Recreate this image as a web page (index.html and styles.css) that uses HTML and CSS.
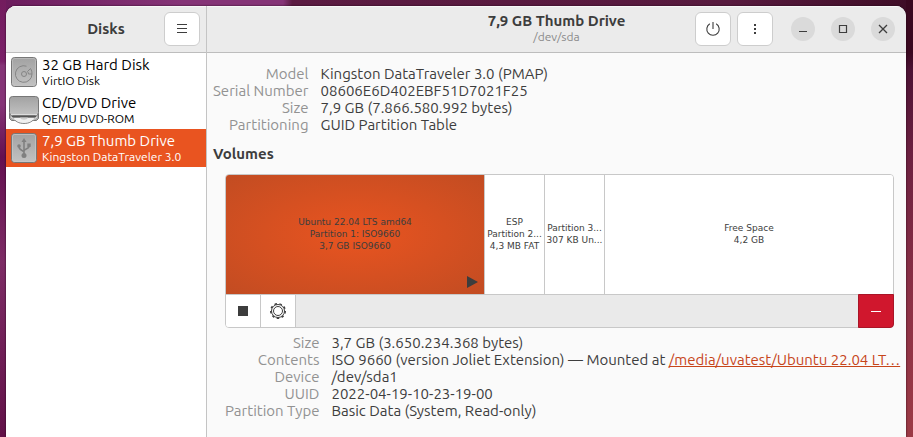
FILE: index.html
```html
<!DOCTYPE html>
<html lang="en">
<head>
<meta charset="utf-8">
<title>Disks</title>
<meta name="viewport" content="width=device-width, initial-scale=1">
<link rel="stylesheet" href="styles.css">
</head>
<body>
<div class="window">
  <aside class="sidebar">
    <header class="bar bar-side">
      <h1 class="title">Disks</h1>
      <button class="tool" type="button" aria-label="Menu">
        <svg width="16" height="16" viewBox="0 0 16 16"><path d="M3 3.500h10M3 7.500h10M3 11.500h10" stroke="#3d3d3d" fill="none"/></svg>
      </button>
    </header>
    <nav class="disks">
      <a class="disk" href="#hdd">
        <svg class="disk-icon" width="32" height="32" viewBox="0 0 32 32">
          <defs><linearGradient id="metal" x1="0" y1="0" x2="0" y2="1"><stop offset="0" stop-color="#a2a2a2"/><stop offset="1" stop-color="#c2c2c2"/></linearGradient></defs>
          <rect x="3.500" y="1.500" width="25" height="29" rx="3" fill="url(#metal)" stroke="#777"/>
          <rect x="4.500" y="2.500" width="23" height="27" rx="2" fill="none" stroke="#c4c4c4" stroke-opacity=".6"/>
          <path d="M18.500 10.200A8.300 8.300 0 1 0 24 18h-3.500a5 5 0 0 0-1-2.500l3-3M24 18a8 8 0 0 0-1.500-5.500" fill="none" stroke="#858585"/>
          <circle cx="16" cy="18" r="2.500" fill="none" stroke="#858585"/>
        </svg>
        <span class="disk-text"><span class="name">32 GB Hard Disk</span><span class="sub">VirtIO Disk</span></span>
      </a>
      <a class="disk" href="#cd">
        <svg class="disk-icon" width="32" height="32" viewBox="0 0 32 32">
          <path d="M1.500 19h29v5.500l-2 2h-25l-2-2z" fill="#aaa" stroke="#777"/>
          <path d="M5 23.500h22c-2 4-6 6-11 6s-9-2-11-6z" fill="#f0f0f0" stroke="#888"/>
          <path d="M12 23.500h8c-1 3-7 3-8 0z" fill="#ccc"/>
          <rect x="1.500" y="2.500" width="29" height="19" rx="3" fill="url(#metal)" stroke="#777"/>
          <path d="M3 20.500h26M3 23l4 3M29 23l-4 3" stroke="#ddd" fill="none"/>
          <path d="M4 22.500h24" stroke="#555"/>
        </svg>
        <span class="disk-text"><span class="name">CD/DVD Drive</span><span class="sub">QEMU DVD-ROM</span></span>
      </a>
      <a class="disk selected" href="#thumb" aria-current="true">
        <svg class="disk-icon" width="32" height="32" viewBox="0 0 32 32">
          <rect x="3.500" y="1.500" width="25" height="29" rx="3" fill="url(#metal)" stroke="#777"/>
          <rect x="4.500" y="2.500" width="23" height="27" rx="2" fill="none" stroke="#c8c8c8" stroke-opacity=".7"/>
          <path d="M16 8v15M16 20.500c0-2.500-5-1.500-5-6M16 19c0-2.500 5-1.500 5-5" fill="none" stroke="#808080" stroke-width="1.600"/>
          <path d="M16 6l-2.500 4h5z" fill="#808080"/><circle cx="16" cy="23.500" r="2.500" fill="#808080"/><circle cx="11" cy="14" r="1.800" fill="#808080"/><rect x="19.300" y="11.500" width="3.400" height="3.400" fill="#808080"/>
        </svg>
        <span class="disk-text"><span class="name">7,9 GB Thumb Drive</span><span class="sub">Kingston DataTraveler 3.0</span></span>
      </a>
    </nav>
  </aside>
  <main class="main">
    <header class="bar bar-main">
      <div class="heading"><h2 class="title">7,9 GB Thumb Drive</h2><span class="path">/dev/sda</span></div>
      <div class="bar-end">
        <div class="actions">
          <button class="tool" type="button" aria-label="Power off">
            <svg width="16" height="16" viewBox="0 0 16 16"><path d="M8 1v7M4.800 2.800a6.200 6.200 0 1 0 6.400 0" stroke="#3d3d3d" stroke-width="1.100" fill="none"/></svg>
          </button>
          <button class="tool" type="button" aria-label="Drive options">
            <svg width="16" height="16" viewBox="0 0 16 16" fill="#3d3d3d"><path d="M7 3h2v2H7zM7 7h2v2H7zM7 11h2v2H7z"/></svg>
          </button>
        </div>
        <div class="controls">
          <button class="round" type="button" aria-label="Minimize"><svg width="16" height="16" viewBox="0 0 16 16"><path d="M4 10.500h8" stroke="#3d3d3d"/></svg></button>
          <button class="round" type="button" aria-label="Maximize"><svg width="16" height="16" viewBox="0 0 16 16"><path d="M4.500 4.500h7v7h-7z" stroke="#3d3d3d" stroke-width="1.200" fill="none"/></svg></button>
          <button class="round" type="button" aria-label="Close"><svg width="16" height="16" viewBox="0 0 16 16"><path d="M4 4l8 8M12 4l-8 8" stroke="#3d3d3d" stroke-width="1.300"/></svg></button>
        </div>
      </div>
    </header>
    <div class="content">
      <dl class="facts">
        <dt>Model</dt><dd>Kingston DataTraveler 3.0 (PMAP)</dd>
        <dt>Serial Number</dt><dd>08606E6D402EBF51D7021F25</dd>
        <dt>Size</dt><dd>7,9 GB (7.866.580.992 bytes)</dd>
        <dt>Partitioning</dt><dd>GUID Partition Table</dd>
      </dl>
      <h3 class="section">Volumes</h3>
      <div class="volume-area">
        <div class="volumes">
          <div class="map">
            <div class="part active">
              <span>Ubuntu 22.04 LTS amd64</span><span>Partition 1: ISO9660</span><span>3,7 GB ISO9660</span>
              <svg class="mounted" width="11" height="12" viewBox="0 0 11 12"><path d="M0 0l11 6-11 6z" fill="#3d3d3d"/></svg>
            </div>
            <div class="part"><span>ESP</span><span>Partition 2...</span><span>4,3 MB FAT</span></div>
            <div class="part"><span>Partition 3...</span><span>307 KB Un...</span></div>
            <div class="part"><span>Free Space</span><span>4,2 GB</span></div>
          </div>
          <div class="strip">
            <button class="cell" type="button" aria-label="Unmount"><svg width="16" height="16" viewBox="0 0 16 16"><path d="M3 3h10v10H3z" fill="#3d3d3d"/></svg></button>
            <button class="cell" type="button" aria-label="Partition options"><svg width="16" height="16" viewBox="0 0 16 16" fill="none" stroke="#3d3d3d"><circle cx="8" cy="8" r="6.500"/><circle cx="8" cy="8" r="4.500"/><circle cx="8" cy="8" r="7.300" stroke-width="1.400" stroke-dasharray="2.500 2.596"/></svg></button>
            <button class="cell delete" type="button" aria-label="Delete partition"><svg width="16" height="16" viewBox="0 0 16 16"><path d="M3 8.500h10" stroke="#fff"/></svg></button>
          </div>
        </div>
        <dl class="facts">
          <dt>Size</dt><dd>3,7 GB (3.650.234.368 bytes)</dd>
          <dt>Contents</dt><dd>ISO 9660 (version Joliet Extension) — Mounted at <a class="link" href="#media">/media/uvatest/Ubuntu 22.04 LT…</a></dd>
          <dt>Device</dt><dd>/dev/sda1</dd>
          <dt>UUID</dt><dd>2022-04-19-10-23-19-00</dd>
          <dt>Partition Type</dt><dd>Basic Data (System, Read-only)</dd>
        </dl>
      </div>
    </div>
  </main>
</div>
</body>
</html>
```
FILE: styles.css
```css
* { box-sizing: border-box; }
body {
  margin: 0;
  min-height: 100vh;
  display: flex;
  padding: 6px 7px 0 6px;
  font-family: Ubuntu, "Noto Sans", sans-serif;
  font-size: 15px;
  line-height: 17px;
  color: #3d3d3d;
  background:
    linear-gradient(to bottom, #3a0820 12%, #4c1234 16%, #6c2040 35%, #8d3145 70%, #9c3a45) right / 7px 100% no-repeat,
    linear-gradient(to bottom, #731c5e, #7a2068 14%, #853477 15%, #853477 24%, #641050 36%, #7d2c65 60%, #621148) left / 6px 100% no-repeat,
    linear-gradient(to right, #6b1b5c, #853477 20%, #853477 31%, #5b1b42 32%, #571a3e 80%, #3e0d26);
}
h1, h2, h3, dl, dd { margin: 0; }
button { font: inherit; padding: 0; border: 0; display: grid; place-items: center; }
svg { display: block; }
.window {
  flex: 1;
  min-width: 0;
  display: flex;
  overflow: hidden;
  border-radius: 10px 10px 0 0;
  background: #fafafa;
  box-shadow: 0 0 2px #1c0614;
}
.sidebar { width: 201px; flex: none; border-right: 1px solid #c4c4c4; background: #fff; }
.bar {
  display: flex;
  align-items: center;
  height: 47px;
  background: #ebebeb;
  border-bottom: 1px solid #bdbdbd;
  box-shadow: inset 0 1px #f8f8f8;
}
.bar-side { padding-right: 6px; }
.title { font-size: 15px; font-weight: 700; line-height: 16px; }
.bar-side .title { flex: 1; text-align: center; padding-left: 42px; }
.tool {
  width: 36px;
  height: 34px;
  background: #fff;
  border: 1px solid #cdcdcd;
  border-radius: 6px;
}
.disk {
  display: flex;
  align-items: center;
  gap: 2px;
  height: 38px;
  padding-left: 2px;
  color: #000;
  text-decoration: none;
  white-space: nowrap;
}
.disk-text { display: flex; flex-direction: column; }
.name { font-size: 15px; line-height: 17px; }
.sub { font-size: 12px; line-height: 16px; }
.selected { background: #e95420; color: #fff; }
.main { flex: 1; min-width: 0; }
.bar-main { display: grid; grid-template-columns: 1fr auto 1fr; }
.heading { grid-column: 2; display: flex; flex-direction: column; align-items: center; white-space: nowrap; }
.path { font-size: 12px; line-height: 16px; color: #8b8b8b; }
.bar-end { display: flex; align-items: center; justify-content: flex-end; gap: 18px; padding-right: 11px; }
.actions { display: flex; gap: 6px; }
.controls { display: flex; gap: 16px; }
.round { width: 24px; height: 24px; border-radius: 50%; background: #dadada; }
.content { padding: 12px 12px 12px 6px; }
.facts { display: grid; grid-template-columns: max-content minmax(0, 1fr); column-gap: 12px; white-space: nowrap; }
.facts dt { text-align: right; color: #929292; }
.link { color: #c7451a; }
.section { font-size: 15px; line-height: 17px; margin: 12px 0; }
.volume-area { padding-left: 12px; }
.volumes { border: 1px solid #c8c8c8; border-radius: 4px; margin-bottom: 6px; }
.map { display: grid; grid-template-columns: 259fr 60fr 60fr 288fr; height: 119px; background: #fff; border-radius: 3px 3px 0 0; }
.part {
  display: flex;
  flex-direction: column;
  align-items: center;
  justify-content: center;
  min-width: 0;
  overflow: hidden;
  padding-bottom: 2px;
  border-right: 1px solid #c8c8c8;
  font: 9px/12px "DejaVu Sans", sans-serif;
  white-space: nowrap;
}
.part:last-child { border-right: 0; }
.active { position: relative; background: radial-gradient(#e95420, #c24c22); border-top-left-radius: 3px; }
.mounted { position: absolute; right: 6px; bottom: 6px; }
.strip { display: flex; height: 33px; background: #eaeaea; border-top: 1px solid #c8c8c8; border-radius: 0 0 3px 3px; }
.cell { width: 35px; background: #fff; border-right: 1px solid #c8c8c8; }
.cell:first-child { border-bottom-left-radius: 3px; }
.delete { width: 36px; margin: -1px -1px -1px auto; background: #d0172d; border: 1px solid #a91527; border-radius: 0 0 4px 0; }
```
